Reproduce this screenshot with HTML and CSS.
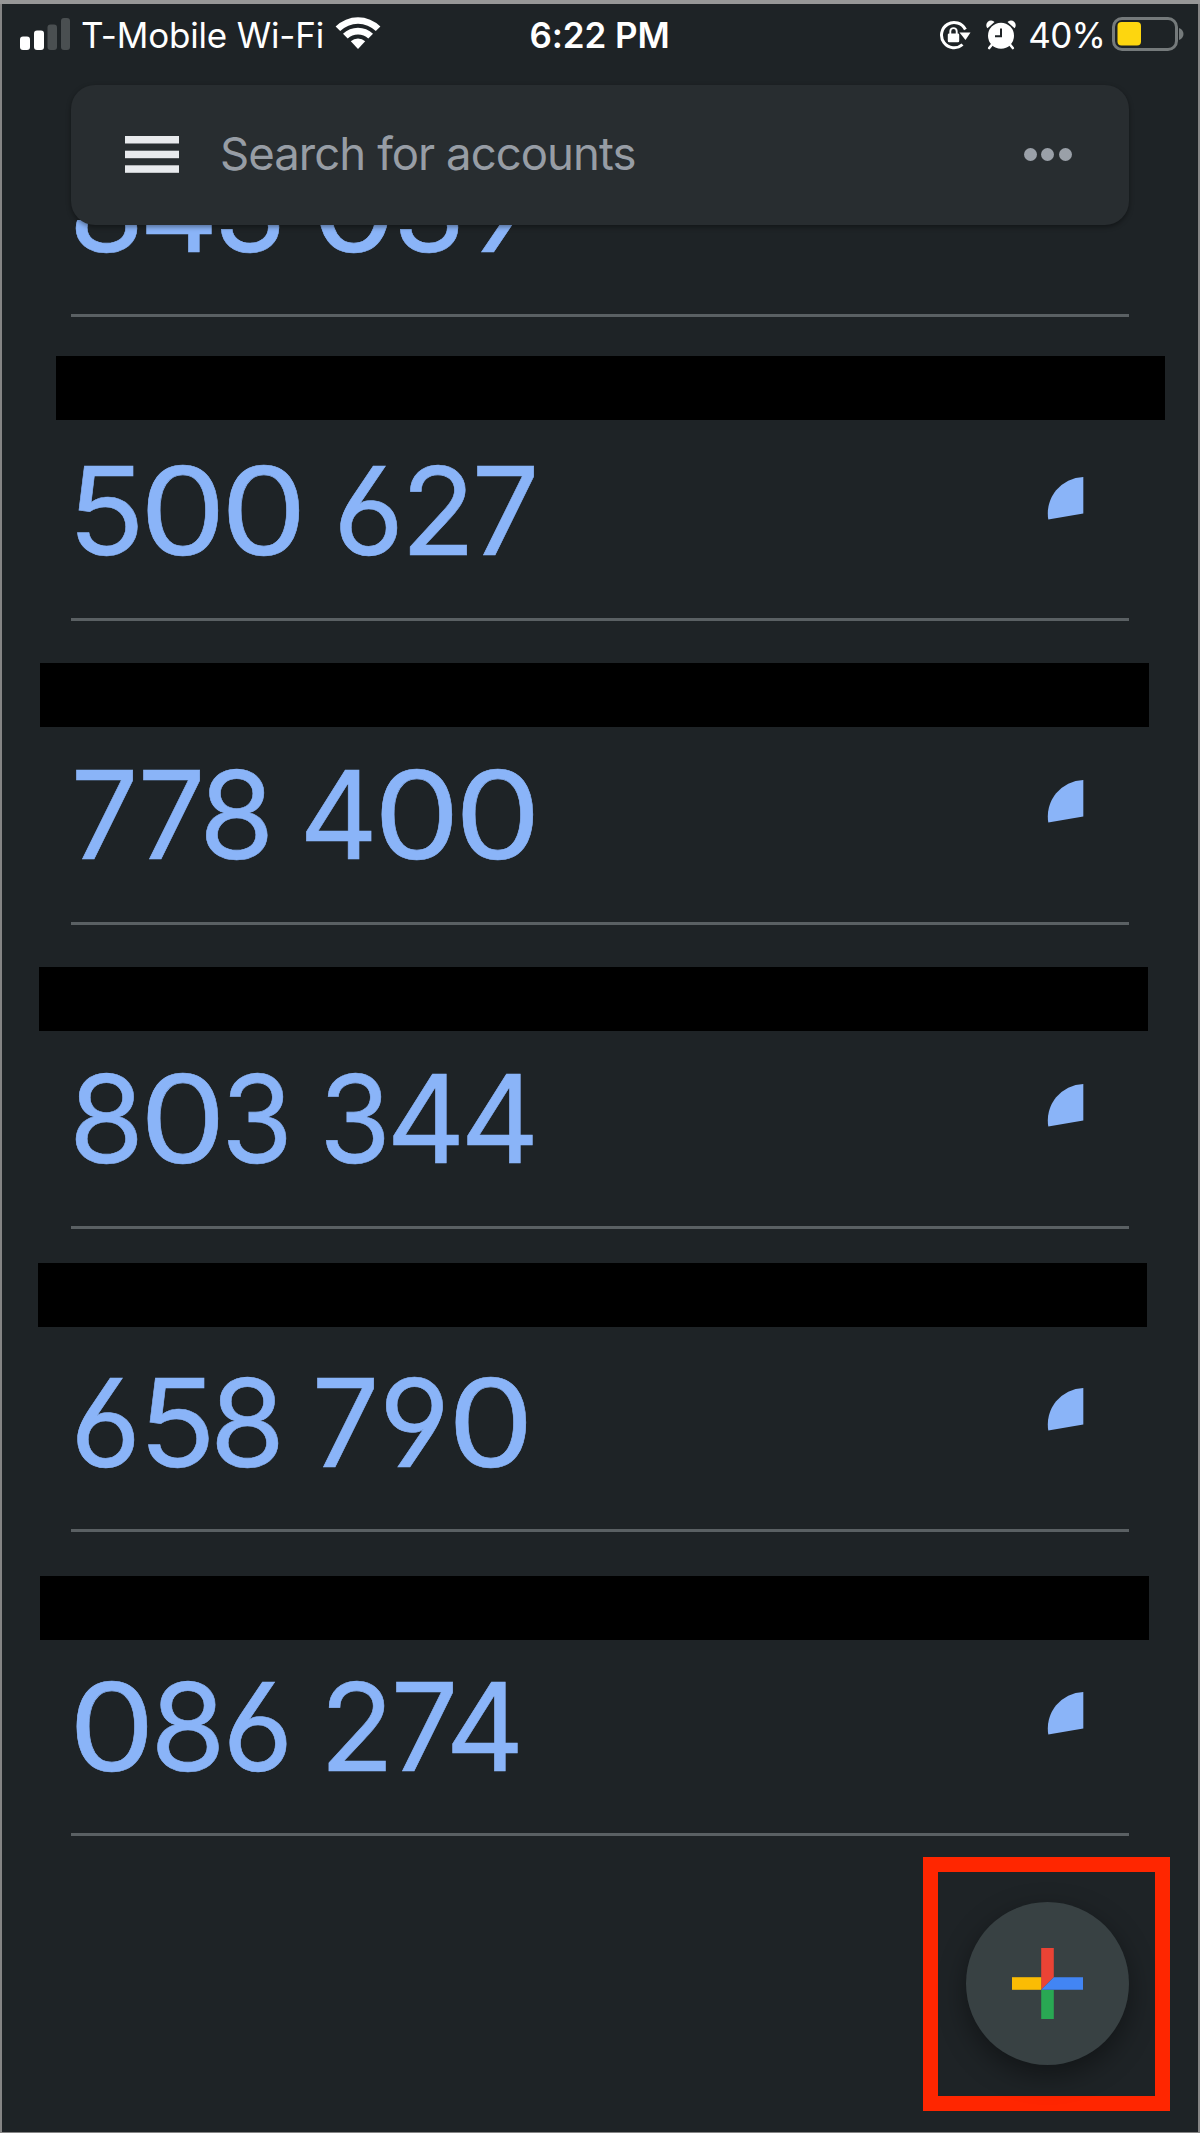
FILE: index.html
```html
<!DOCTYPE html>
<html lang="en">
<head>
<meta charset="utf-8">
<title>Authenticator</title>
<link rel="stylesheet" href="styles.css">
</head>
<body>
<div class="screen">
  <header class="top">
    <div class="status">
      <div class="status-left">
        <svg class="signal" width="50" height="32" viewBox="0 0 50 32">
          <g fill="#fff"><rect x="0" y="18.5" width="10" height="13.5" rx="3"/><rect x="14" y="12.5" width="10" height="19.5" rx="3"/></g>
          <g fill="#4a4f51"><rect x="27.5" y="6.500" width="9.500" height="25.5" rx="3"/><rect x="41" y="0" width="9" height="32" rx="3"/></g>
        </svg>
        <span class="carrier">T-Mobile Wi-Fi</span>
        <svg class="wifi" width="46" height="34" viewBox="0 0 46 34" fill="#fff">
          <path d="M.6 10.400a32 32 0 0 1 44.800 0l-4.600 4.700a25.500 25.500 0 0 0-35.600 0z"/>
          <path d="M8 17.800a21.500 21.500 0 0 1 30 0l-4.700 4.700a15 15 0 0 0-20.600 0z"/>
          <path d="M15.800 25.300a10.800 10.800 0 0 1 14.400 0L23 33z"/>
        </svg>
      </div>
      <div class="time">6:22 PM</div>
      <div class="status-right">
        <svg class="lock" width="32" height="30" viewBox="0 0 32 30">
          <path d="M26.400 9.500A12.600 12.600 0 1 0 23.500 24.500" fill="none" stroke="#fff" stroke-width="3"/>
          <path d="M20.500 12.500h11l-5 7.500z" fill="#fff"/>
          <rect x="8.800" y="13.500" width="11.400" height="8.700" rx="1.300" fill="#fff"/>
          <path d="M11.300 14v-2.700a3.200 3.200 0 0 1 6.400 0V14" fill="none" stroke="#fff" stroke-width="1.900"/>
        </svg>
        <svg class="alarm" width="30" height="30" viewBox="0 0 30 30">
          <g stroke="#fff" stroke-width="2.600" stroke-linecap="round"><path d="M6.500 24l-3.300 4M23.500 24l3.300 4"/></g>
          <path d="M1.500 8.300a4.300 4.300 0 0 1 7-6.300zM28.500 8.300a4.300 4.300 0 0 0-7-6.300z" fill="#fff"/>
          <circle cx="15" cy="15.800" r="13" fill="#fff"/>
          <path d="M15 8.500v7.700H9" fill="none" stroke="#1e2326" stroke-width="2"/>
        </svg>
        <span class="percent">40%</span>
        <svg class="battery" width="72" height="34" viewBox="0 0 72 34">
          <rect x="1.500" y="1.500" width="63" height="31" rx="8.500" fill="none" stroke="#757a7b" stroke-width="3"/>
          <rect x="5.500" y="5" width="23.500" height="23.500" rx="4" fill="#fdd60f"/>
          <path d="M67 11c6 2 6 10 0 12z" fill="#757a7b"/>
        </svg>
      </div>
    </div>
    <div class="search">
      <svg class="menu" width="54" height="37" viewBox="0 0 54 37" fill="#e8eaed">
        <rect y="0" width="54" height="7.500"/><rect y="14.700" width="54" height="7.500"/><rect y="29.300" width="54" height="7.500"/>
      </svg>
      <span class="placeholder">Search for accounts</span>
      <div class="more"><i></i><i></i><i></i></div>
    </div>
  </header>

  <main class="list">
    <section class="account a0">
      <div class="line"><div class="code"><b class="d8">8</b><b class="d4">4</b><b class="d3">3</b><b class="sp"> </b><b class="d0">0</b><b class="d3">3</b><b class="d9">9</b></div></div>
    </section>
    <section class="account a1">
      <div class="name"></div>
      <div class="line"><div class="code"><b class="d5">5</b><b class="d0">0</b><b class="d0">0</b><b class="sp"> </b><b class="d6">6</b><b class="d2">2</b><b class="d7">7</b></div>
      <svg class="timer" width="37" height="44" viewBox="0 0 37 44"><path d="M36.300 0V36.500L1.300 42.500A36.500 36.500 0 0 1 36.300 0z"/></svg></div>
    </section>
    <section class="account a2">
      <div class="name"></div>
      <div class="line"><div class="code"><b class="d7">7</b><b class="d7 k8">7</b><b class="d8">8</b><b class="sp"> </b><b class="d4">4</b><b class="d0">0</b><b class="d0">0</b></div>
      <svg class="timer" width="37" height="44" viewBox="0 0 37 44"><path d="M36.300 0V36.500L1.300 42.500A36.500 36.500 0 0 1 36.300 0z"/></svg></div>
    </section>
    <section class="account a3">
      <div class="name"></div>
      <div class="line"><div class="code"><b class="d8">8</b><b class="d0">0</b><b class="d3">3</b><b class="sp"> </b><b class="d3">3</b><b class="d4">4</b><b class="d4">4</b></div>
      <svg class="timer" width="37" height="44" viewBox="0 0 37 44"><path d="M36.300 0V36.500L1.300 42.500A36.500 36.500 0 0 1 36.300 0z"/></svg></div>
    </section>
    <section class="account a4">
      <div class="name"></div>
      <div class="line"><div class="code"><b class="d6">6</b><b class="d5">5</b><b class="d8">8</b><b class="sp"> </b><b class="d7">7</b><b class="d9">9</b><b class="d0">0</b></div>
      <svg class="timer" width="37" height="44" viewBox="0 0 37 44"><path d="M36.300 0V36.500L1.300 42.500A36.500 36.500 0 0 1 36.300 0z"/></svg></div>
    </section>
    <section class="account a5">
      <div class="name"></div>
      <div class="line"><div class="code"><b class="d0">0</b><b class="d8">8</b><b class="d6">6</b><b class="sp"> </b><b class="d2">2</b><b class="d7 k4">7</b><b class="d4">4</b></div>
      <svg class="timer" width="37" height="44" viewBox="0 0 37 44"><path d="M36.300 0V36.500L1.300 42.500A36.500 36.500 0 0 1 36.300 0z"/></svg></div>
    </section>
  </main>

  <div class="highlight">
    <div class="fab">
      <svg width="71" height="71" viewBox="0 0 71 71">
        <path d="M29.200 0h12.600v29.200L29.200 41.800z" fill="#ea4335"/>
        <path d="M0 29.200h29.200v12.600H0z" fill="#fbbc04"/>
        <path d="M29.200 41.800h12.600V71H29.200z" fill="#29a853"/>
        <path d="M41.800 29.200H71v12.600H29.200z" fill="#4285f4"/>
      </svg>
    </div>
  </div>
</div>
</body>
</html>
```
FILE: styles.css
```css
* { box-sizing: border-box; }
body { margin: 0; background: #1e2326; font-family: Inter, "Liberation Sans", sans-serif; }
svg { display: block; flex: none; }

.screen {
  position: relative;
  width: 1200px;
  height: 2133px;
  overflow: hidden;
  background: #1e2326;
  box-shadow: inset 0 4px #979797, inset 2px 0 #858585, inset -2px 0 #858585, inset 0 -1px #858585;
}

/* Header floats over the scrolling list */
.top { position: absolute; inset: 0 0 auto 0; z-index: 2; }

.status {
  display: grid;
  grid-template-columns: 1fr auto 1fr;
  height: 85px;
  padding: 16px 16px 0 20px;
  color: #fff;
  font-size: 35px;
  line-height: 38px;
}
.status-left, .status-right { display: flex; align-items: flex-start; }
.status-right { justify-content: flex-end; }
.signal { margin-top: 2px; }
.carrier { margin-left: 11px; letter-spacing: -.18px; white-space: nowrap; }
.wifi { margin-left: 11px; }
.time { margin: 0 5px 0 0; font-weight: 600; letter-spacing: -.1px; }
.lock { margin-top: 4px; }
.alarm { margin: 4px 0 0 15px; }
.percent { margin-left: 12px; letter-spacing: -.8px; }
.battery { margin: 1px 0 0 7px; }

.search {
  display: flex;
  align-items: center;
  height: 139.5px;
  margin: 0 71px;
  padding: 0 57.5px 0 54px;
  border-radius: 24px;
  background: #282d30;
  box-shadow: 0 2px 5px rgba(0, 0, 0, .4);
}
.placeholder {
  margin: -1px 0 0 41px;
  color: #979da5;
  font-size: 45.5px;
  font-weight: 400;
  line-height: 56px;
  letter-spacing: -.95px;
}
.more { display: flex; gap: 4.500px; margin-left: auto; }
.more i { width: 13px; height: 13px; border-radius: 50%; background: #9aa0a8; }

/* The scroll viewport starts just under the search bar */
.list { margin-top: 220px; padding: 0 71px; overflow: hidden; }
.account {
  display: flex;
  flex-direction: column;
  height: 303.8px;
  padding-bottom: 45.7px;
  border-bottom: 3px solid #5a6063;
}
.name { flex: none; width: 1109px; height: 64px; background: #000; }
.a0 { height: 97.3px; justify-content: flex-end; }
.a1 .name { margin: 38.4px 0 0 -15.4px; }
.a2 .name { margin: 42.4px 0 0 -31.5px; }
.a3 .name { margin: 42.1px 0 0 -32.5px; }
.a4 .name { margin: 34.3px 0 0 -33px; }
.a5 .name { margin: 43.5px 0 0 -30.8px; }

.line { display: flex; align-items: flex-start; justify-content: space-between; margin-top: auto; }
.a0 .line { margin-top: 0; }
.code {
  display: flex;
  height: 122px;
  color: #8ab4f8;
  font-size: 122px;
  line-height: 122px;
  font-feature-settings: "cv03", "cv04";
  -webkit-text-stroke: .6px #8ab4f8;
}
.code b { display: flex; justify-content: center; font-weight: 400; }
.d0 { width: 81.5px; transform: scaleX(1.12); }
.d2 { width: 67.5px; }
.d3 { width: 68px; transform: scaleX(.95); }
.d4 { width: 74.2px; }
.d5 { width: 70.5px; transform: scaleX(1.04); }
.d6 { width: 70.5px; transform: translateX(-.5px); }
.d7 { width: 67px; transform: scaleX(.98); }
.d8 { width: 70.8px; }
.d9 { width: 70.8px; }
.sp { width: 29.4px; }
.k4 { margin-right: -9.8px; }
.k8 { margin-right: -3.6px; }
.timer { margin: 26.2px 45.2px 0 0; fill: #8ab4f8; }

/* Callout frame around the add button */
.highlight {
  position: absolute;
  left: 923px;
  top: 1857px;
  width: 246.5px;
  height: 254px;
  padding: 30px 0 0 28px;
  border: 15px solid #ff2600;
}
.fab {
  display: flex;
  align-items: center;
  justify-content: center;
  width: 163px;
  height: 163px;
  border-radius: 50%;
  background: #384143;
  box-shadow: 0 10px 28px rgba(0, 0, 0, .4);
}
```
